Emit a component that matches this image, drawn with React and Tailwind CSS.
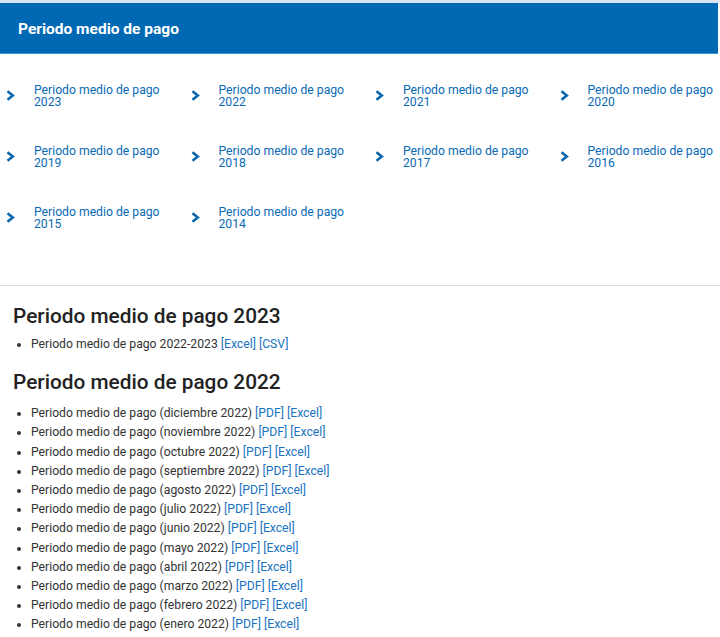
import React from "react";

const years = [2023, 2022, 2021, 2020, 2019, 2018, 2017, 2016, 2015, 2014];

const months2022 = [
  "diciembre",
  "noviembre",
  "octubre",
  "septiembre",
  "agosto",
  "julio",
  "junio",
  "mayo",
  "abril",
  "marzo",
  "febrero",
  "enero",
];

function Chevron() {
  return (
    <svg width="9" height="11" viewBox="0 0 9 11" className="shrink-0">
      <path d="M1.5 1.2 L6.8 5.5 L1.5 9.8" fill="none" stroke="#0a66ad" strokeWidth="2.6" strokeLinejoin="miter" />
    </svg>
  );
}

function Link({ children }) {
  return (
    <a href="#" className="text-[#1a73c0]">
      [{children}]
    </a>
  );
}

export default function App() {
  return (
    <div className="bg-white min-h-[637px] text-[#333] font-['Roboto',sans-serif]">
      <div className="h-[3px] bg-[#d9e6f1]" />
      <header className="h-[51px] bg-[#0069b3] border-b border-[#3a8fcf] flex items-center pl-[18px] pt-[4px] mr-[2px]">
        <h1 className="text-white text-[15.5px] font-bold">Periodo medio de pago</h1>
      </header>

      <nav className="pt-[11px] pb-[37px] pl-[6px] border-b border-[#dcdcdc] overflow-hidden">
        <div className="grid grid-cols-[repeat(4,184.5px)] w-[738px]">
          {years.map((y) => (
            <a key={y} href="#" className="h-[61px] flex items-center">
              <span className="w-[28px] flex items-center">
                <Chevron />
              </span>
              <span className="w-[140px] text-[12.2px] leading-[12px] text-[#0a6bb5]">
                Periodo medio de pago<br />
                {y}
              </span>
            </a>
          ))}
        </div>
      </nav>

      <main className="pl-[13px] pt-[16px]">
        <h2 className="text-[20.8px] font-medium text-[#222] leading-[28px]">Periodo medio de pago 2023</h2>
        <ul className="mt-[5px] pl-[18px] list-disc text-[12.2px] leading-[19.2px]">
          <li>
            Periodo medio de pago 2022-2023 <Link>Excel</Link> <Link>CSV</Link>
          </li>
        </ul>
        <h2 className="mt-[14px] text-[20.8px] font-medium text-[#222] leading-[28px]">Periodo medio de pago 2022</h2>
        <ul className="mt-[8px] pl-[18px] list-disc text-[12.2px] leading-[19.2px]">
          {months2022.map((m) => (
            <li key={m}>
              Periodo medio de pago ({m} 2022) <Link>PDF</Link> <Link>Excel</Link>
            </li>
          ))}
        </ul>
      </main>
    </div>
  );
}
